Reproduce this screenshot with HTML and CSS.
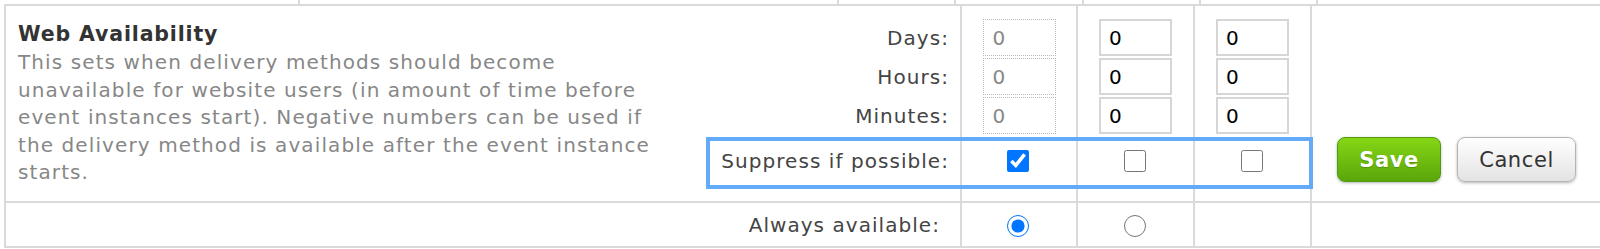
FILE: index.html
```html
<!DOCTYPE html>
<html lang="en">
<head>
<meta charset="utf-8">
<title>Web Availability</title>
<link rel="stylesheet" href="styles.css">
</head>
<body>
<div class="top-strip"><span></span><span></span><span></span><span></span><span></span><span></span><span></span></div>
<div class="table">
  <div class="main-row cols">
    <div class="vline vb"></div>
    <div class="vline vc"></div>
    <div class="vline vd"></div>
    <div class="vline ve"></div>

    <div class="desc">
      <h2 class="title">Web Availability</h2>
      <p class="text">This sets when delivery methods should become unavailable for website users (in amount of time before event instances start). Negative numbers can be used if the delivery method is available after the event instance starts.</p>
    </div>

    <div class="label r1">Days:</div>
    <input class="num dis c1 r1" type="text" value="0" readonly>
    <input class="num c2 r1" type="text" value="0">
    <input class="num c3 r1" type="text" value="0">

    <div class="label r2">Hours:</div>
    <input class="num dis c1 r2" type="text" value="0" readonly>
    <input class="num c2 r2" type="text" value="0">
    <input class="num c3 r2" type="text" value="0">

    <div class="label r3">Minutes:</div>
    <input class="num dis c1 r3" type="text" value="0" readonly>
    <input class="num c2 r3" type="text" value="0">
    <input class="num c3 r3" type="text" value="0">

    <div class="hl"></div>
    <div class="label r4 sup">Suppress if possible:</div>
    <input class="chk c1 r4 sup" type="checkbox" checked>
    <input class="chk c2 r4 sup" type="checkbox">
    <input class="chk c3 r4 sup" type="checkbox">

    <div class="actions">
      <button class="btn save" type="button">Save</button>
      <button class="btn cancel" type="button">Cancel</button>
    </div>
  </div>

  <div class="bottom-row cols">
    <div class="vline vb"></div>
    <div class="vline vc"></div>
    <div class="vline vd"></div>
    <div class="vline ve"></div>
    <div class="label always">Always available:</div>
    <input class="radio c1" type="radio" name="always" checked>
    <input class="radio c2" type="radio" name="always">
  </div>
</div>
</body>
</html>
```

FILE: styles.css
```css
html, body {
  margin: 0;
  padding: 0;
  background: #ffffff;
}

body {
  width: 1600px;
  height: 249px;
  overflow: hidden;
  font-family: Verdana, "DejaVu Sans", sans-serif;
  color: #444444;
}

.top-strip {
  display: grid;
  grid-template-columns: 298px 539px 117px 128px 117px 117px 1fr;
  height: 4px;
}

.top-strip span + span {
  border-left: 2px solid #dadada;
}

.table {
  margin-left: 4px;
  border-left: 2px solid #dadada;
  border-top: 2px solid #dadada;
  border-bottom: 2px solid #dadada;
}

.cols {
  display: grid;
  grid-template-columns: 700px 254px 116px 117px 117px 1fr;
}

.main-row {
  grid-template-rows: 12px 39px 39px 39px 56px 10px;
  border-bottom: 2px solid #dadada;
}

.bottom-row {
  grid-template-rows: 43px;
}

.vline {
  grid-row: 1 / -1;
  border-left: 2px solid #dadada;
}

.vb { grid-column: 3; }
.vc { grid-column: 4; }
.vd { grid-column: 5; }
.ve { grid-column: 6; }

.desc {
  grid-column: 1;
  grid-row: 1 / -1;
  padding: 15px 0 0 12px;
}

.title {
  margin: 0;
  font-size: 20.5px;
  line-height: 27px;
  font-weight: bold;
  letter-spacing: 0.85px;
  color: #333333;
}

.text {
  margin: 1px 0 0;
  width: 650px;
  font-size: 20px;
  line-height: 27.6px;
  letter-spacing: 1.1px;
  color: #878787;
}

.label {
  grid-column: 2;
  align-self: center;
  text-align: right;
  padding-right: 11px;
  font-size: 20px;
  line-height: 24px;
  letter-spacing: 1.05px;
  color: #444444;
  white-space: nowrap;
}

.r1 { grid-row: 2; }
.r2 { grid-row: 3; }
.r3 { grid-row: 4; }
.r4 { grid-row: 5; }

.c1 { grid-column: 3; }
.c2 { grid-column: 4; }
.c3 { grid-column: 5; }

.num {
  justify-self: center;
  align-self: center;
  box-sizing: border-box;
  width: 73px;
  height: 37px;
  margin: 0 0 0 2px;
  padding: 0 0 0 8px;
  border: 2px solid #d6d6d6;
  border-radius: 0;
  background: #ffffff;
  font-family: Verdana, "DejaVu Sans", sans-serif;
  font-size: 20px;
  letter-spacing: 1px;
  color: #000000;
  outline: none;
}

.num.dis {
  border: 1px dotted #b8b8b8;
  padding-left: 9px;
  color: #888888;
}

.hl {
  grid-column: 2 / 6;
  grid-row: 5;
  margin: 2px -3px 2px 0;
  border: 4px solid #63abf9;
  z-index: 1;
}

.sup {
  margin-bottom: 5px;
}

.chk {
  justify-self: center;
  align-self: center;
  width: 22px;
  height: 22px;
  margin-top: 0;
  margin-left: 0;
  margin-right: 0;
}

.actions {
  grid-column: 6;
  grid-row: 5;
  align-self: start;
  display: flex;
  gap: 16px;
  margin-top: 2px;
  padding-left: 27px;
}

.btn {
  box-sizing: border-box;
  height: 45px;
  padding: 0;
  border-radius: 8px;
  font-family: Verdana, "DejaVu Sans", sans-serif;
  font-size: 21px;
  letter-spacing: 0.6px;
  box-shadow: 0 1px 3px rgba(0, 0, 0, 0.3);
}

.save {
  width: 104px;
  border: 1.5px solid #4f9a10;
  background: linear-gradient(#86d616, #5aa60a);
  color: #ffffff;
  font-weight: bold;
  text-shadow: 0 1px 1px rgba(0, 0, 0, 0.2);
}

.cancel {
  width: 119px;
  border: 1.5px solid #b4b4b4;
  background: linear-gradient(#ffffff, #e3e3e3);
  color: #333333;
}

.always {
  grid-column: 1 / 3;
  grid-row: 1;
  padding-right: 20px;
}

.radio {
  grid-row: 1;
  justify-self: center;
  align-self: center;
  width: 22px;
  height: 22px;
  margin: 2px 0 0 0;
}
```
